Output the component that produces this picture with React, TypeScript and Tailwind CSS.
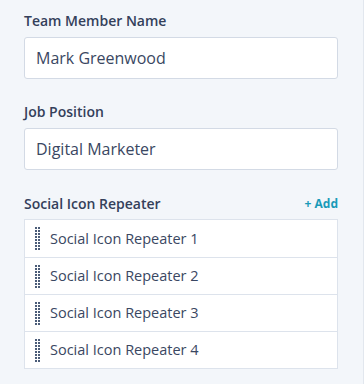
import React from "react";

function Handle() {
  return (
    <div className="grid grid-cols-2 gap-x-[1px] gap-y-[1px] w-[5px]">
      {Array.from({ length: 16 }).map((_, i) => (
        <span key={i} className="block w-[2px] h-[2px] bg-[#4b5c78]" />
      ))}
    </div>
  );
}

export default function App() {
  const rows = [1, 2, 3, 4];
  return (
    <div
      className="w-[364px] h-[384px] bg-[#f3f6fa] border-r border-[#e2e7ee] pl-6 pr-[25px] pt-[11px]"
      style={{ fontFamily: "'Open Sans', sans-serif" }}
    >
      <div className="text-[14px] font-semibold text-[#34405a] leading-5">Team Member Name</div>
      <div className="mt-[6px] h-[42px] bg-white border border-[#d3dae5] rounded-[3px] flex items-center pl-[11px] text-[16px] text-[#3a4762]">
        Mark Greenwood
      </div>
      <div className="mt-[23px] text-[14px] font-semibold text-[#34405a] leading-5">Job Position</div>
      <div className="mt-[6px] h-[42px] bg-white border border-[#d3dae5] rounded-[3px] flex items-center pl-[11px] text-[16px] text-[#3a4762]">
        Digital Marketer
      </div>
      <div className="mt-[24px] flex items-center justify-between">
        <span className="text-[14px] font-semibold text-[#34405a] leading-5">Social Icon Repeater</span>
        <span className="text-[12px] font-bold text-[#1a9ab8] leading-5">+ Add</span>
      </div>
      <div className="mt-[5px] bg-white border border-[#dde3ec]">
        {rows.map((n, i) => (
          <div
            key={n}
            className={`h-[37px] flex items-center pl-[10px] ${i > 0 ? "border-t border-[#dde3ec]" : ""}`}
          >
            <Handle />
            <span className="ml-[10px] text-[14.5px] text-[#3a4762]">Social Icon Repeater {n}</span>
          </div>
        ))}
      </div>
    </div>
  );
}
